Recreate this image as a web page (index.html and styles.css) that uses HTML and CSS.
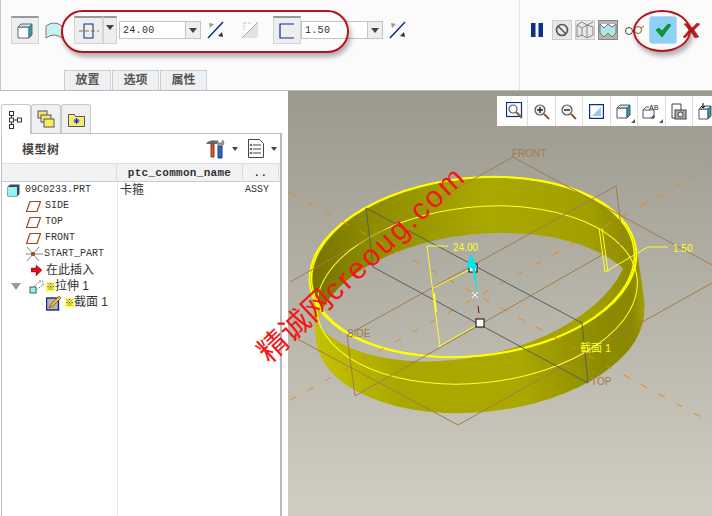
FILE: index.html
```html
<!DOCTYPE html>
<html>
<head>
	<title>Extrude - model tree</title>
	<meta charset="utf-8">
	<link rel="stylesheet" href="styles.css">
</head>
<body>

<div id="app">
	<div class="ribbon">
		<div class="ribbon-main">
			<div class="tools">
				<div class="tool-btn solid-btn">
					<svg width="16" height="16" viewBox="0 0 16 16"><path d="M1 4h11v11H1z" fill="#fff" stroke="#667"/><path d="M1 4l3-3h11l-3 3z" fill="#bfeeee" stroke="#667"/><path d="M12 4l3-3v11l-3 3z" fill="#18a8a8" stroke="#667"/></svg>
				</div>
				<svg class="surf-icon" width="18" height="18" viewBox="0 0 18 18"><path d="M1 17V5Q9 -1 17 5V17Q9 11 1 17z" fill="#c8f2f0" stroke="#778"/></svg>
				<div class="tool-btn side-btn">
					<svg width="20" height="18" viewBox="0 0 20 18"><rect x="5" y="2" width="9" height="14" fill="none" stroke="#0a2a8a"/><path d="M0 9h20" stroke="#a8642c" stroke-dasharray="4 2"/></svg>
				</div>
				<div class="tool-drop"><i class="arrow"></i></div>
				<div class="field first-field">
					<span class="field-value">24.00</span>
					<span class="field-drop"><i class="arrow"></i></span>
				</div>
				<svg class="flip-a" width="18" height="18" viewBox="0 0 18 18"><path d="M1 17L16 1" stroke="#0a2a8a" stroke-width="1.5"/><path d="M2 2l5 1-4 4z" fill="#999"/><path d="M16 16l-5-1 4-4z" fill="#333"/></svg>
				<svg class="thicken" width="19" height="18" viewBox="0 0 19 18"><path d="M1 17L17 1v14l-2 2z" fill="#e2e2e2"/><path d="M1 17L17 1" stroke="#aaa"/><path d="M3 2h8M3 2v7" stroke="#aaa" stroke-dasharray="1 1"/></svg>
				<div class="tool-btn thick-btn">
					<svg width="16" height="16" viewBox="0 0 16 16"><path d="M15 1H1v14h14" fill="none" stroke="#0a2a8a" stroke-width="1.2"/></svg>
				</div>
				<div class="field second-field">
					<span class="field-value">1.50</span>
					<span class="field-drop"><i class="arrow"></i></span>
				</div>
				<svg class="flip-b" width="18" height="18" viewBox="0 0 18 18"><path d="M1 17L16 1" stroke="#0a2a8a" stroke-width="1.5"/><path d="M2 2l5 1-4 4z" fill="#999"/><path d="M16 16l-5-1 4-4z" fill="#333"/></svg>
			</div>
			<div class="tabs">
				<div class="tab">放置</div>
				<div class="tab">选项</div>
				<div class="tab">属性</div>
			</div>
		</div>
		<div class="ribbon-actions">
			<svg class="pause" width="12" height="14" viewBox="0 0 12 14"><path d="M0 0h4.500v14H0zM7.500 0H12v14H7.500z" fill="#0e2f8e"/></svg>
			<div class="mini-btn">
				<svg width="14" height="14" viewBox="0 0 14 14"><circle cx="7" cy="7" r="5.500" fill="none" stroke="#555" stroke-width="1.600"/><path d="M3 3l8 8" stroke="#555" stroke-width="1.600"/></svg>
			</div>
			<div class="mini-btn">
				<svg width="18" height="18" viewBox="0 0 18 18" fill="none" stroke="#888"><path d="M1 4l5 3 5-3 6 2v8l-6 3-5-3-5 2zM6 7v8M11 4v13M1 4l5-3 5 3 6-3"/></svg>
			</div>
			<div class="mini-btn mini-on">
				<svg width="18" height="16" viewBox="0 0 18 16"><path d="M1 2l4 4 4-4 4 3 4-3v9l-4 4-4-4-4 4-4-4z" fill="#aee6ea" stroke="#777"/><path d="M1 2l4 4 4-4 4 3 4-3" fill="#fff" stroke="#777"/></svg>
			</div>
			<svg class="glasses" width="20" height="12" viewBox="0 0 20 12" fill="none"><circle cx="5" cy="7" r="3.500" stroke="#444"/><circle cx="14" cy="6" r="3.500" stroke="#8a5a2a"/><path d="M8.500 6l2-.5M17 4l3-2" stroke="#8a5a2a"/></svg>
			<div class="ok-btn">
				<svg width="16" height="14" viewBox="0 0 16 14"><path d="M1 7l3-2 3 3 6-7 3 1-9 12z" fill="#0c9a2c" stroke="#066a1c" stroke-width=".6"/></svg>
			</div>
			<svg class="cancel" width="17" height="15" viewBox="0 0 17 15"><path d="M1 1l4-1 4 5 5-5 3 1-6 6 5 7-4 1-4-6-6 6-2-1 6-7z" fill="#c8201c" stroke="#8c1410" stroke-width=".4"/></svg>
		</div>
	</div>

	<div class="work">
		<div class="tree-panel">
			<div class="panel-tabs">
				<div class="panel-tab panel-tab-on">
					<svg width="14" height="18" viewBox="0 0 14 18" fill="#fff" stroke="#333"><rect x=".5" y=".5" width="4" height="4"/><rect x=".5" y="7" width="4" height="4"/><rect x=".5" y="13.500" width="4" height="4"/><rect x="8.500" y="7" width="4" height="4"/><path d="M2.500 4.500V7M2.500 11v2.500M4.500 9h4" fill="none"/></svg>
				</div>
				<div class="panel-tab">
					<svg width="18" height="18" viewBox="0 0 18 18" stroke="#555" fill="#f4e878"><rect x="1" y="1" width="9" height="7"/><rect x="4" y="5" width="10" height="7"/><rect x="7" y="9" width="10" height="8" fill="#f8ec60"/></svg>
				</div>
				<div class="panel-tab">
					<svg width="17" height="15" viewBox="0 0 17 15"><path d="M.5 2.500h6l1 2h9v10H.5z" fill="#f6ee70" stroke="#555"/><path d="M8.500 6v6M5.500 9h6M6.500 7l4 4M10.500 7l-4 4" stroke="#1020d0"/></svg>
				</div>
			</div>
			<div class="panel-body">
				<div class="panel-head">
					<h2>模型树</h2>
					<svg class="tools-icon" width="19" height="20" viewBox="0 0 19 20"><path d="M0 4q5-4 11-2v3H1z" fill="#667"/><path d="M5 5h3v13H5z" fill="#d8562c" stroke="#8a3a1c"/><path d="M12 7h4v12h-4z" fill="#2c68c8" stroke="#1c3a80"/><path d="M11 1l2 3h2l2-3 1 4-2 2h-4z" fill="#999" stroke="#555" stroke-width=".5"/></svg>
					<i class="arrow head-arrow"></i>
					<svg class="list-icon" width="16" height="19" viewBox="0 0 16 19" fill="none" stroke="#444"><path d="M.5.5h11l4 4v14H.5z" fill="#fff"/><path d="M5 6h8M5 10h8M5 14h8"/><circle cx="3" cy="6" r=".8"/><circle cx="3" cy="10" r=".8"/><circle cx="3" cy="14" r=".8"/></svg>
					<i class="arrow head-arrow last-arrow"></i>
				</div>
				<div class="grid-head">
					<div class="col-name"></div>
					<div class="col-common">ptc_common_name</div>
					<div class="col-dots">..</div>
				</div>
				<div class="grid-body">
					<div class="row">
						<div class="col-name part">
							<svg class="ico" width="13" height="13" viewBox="0 0 13 13"><path d="M.5 3L3 .5h9.500v9.500L10 12.500H.5z" fill="#445"/><rect x="1" y="3" width="9" height="9" fill="#8ff4f4"/></svg>
							<span>09C0233.PRT</span>
						</div>
						<div class="col-common cjk">卡箍</div>
						<div class="col-dots">ASSY</div>
					</div>
					<div class="row"><div class="col-name child">
						<svg class="ico" width="15" height="11" viewBox="0 0 15 11"><path d="M4 .5h10.500L11 10.500H.5z" fill="none" stroke="#9a4a1c" stroke-width="1.200"/></svg>
						<span>SIDE</span>
					</div></div>
					<div class="row"><div class="col-name child">
						<svg class="ico" width="15" height="11" viewBox="0 0 15 11"><path d="M4 .5h10.500L11 10.500H.5z" fill="none" stroke="#9a4a1c" stroke-width="1.200"/></svg>
						<span>TOP</span>
					</div></div>
					<div class="row"><div class="col-name child">
						<svg class="ico" width="15" height="11" viewBox="0 0 15 11"><path d="M4 .5h10.500L11 10.500H.5z" fill="none" stroke="#9a4a1c" stroke-width="1.200"/></svg>
						<span>FRONT</span>
					</div></div>
					<div class="row"><div class="col-name child">
						<svg class="ico" width="17" height="16" viewBox="0 0 17 16" fill="none" stroke="#666"><path d="M1 1l12 14M13 1L1 15M0 8h17" stroke-width=".8"/><circle cx="7" cy="8" r="2" fill="#9a4a1c" stroke="none"/></svg>
						<span class="tight">START_PART</span>
					</div></div>
					<div class="row"><div class="col-name child">
						<svg class="ico ico-arrow" width="11" height="11" viewBox="0 0 11 11"><path d="M0 3h5V0l6 5-6 6V7H0z" fill="#d8101c" stroke="#600" stroke-width=".4"/></svg>
						<span class="cjk">在此插入</span>
					</div></div>
					<div class="row"><div class="col-name child feature">
						<i class="twist"></i>
						<svg class="ico" width="15" height="14" viewBox="0 0 15 14" fill="none"><rect x="1" y="7" width="6" height="6" fill="#8ff4f4" stroke="#555"/><path d="M4 7l8-6M7 10l7-5M10 1h4v4" stroke="#889" stroke-dasharray="2 1"/></svg>
						<span class="cjk"><b class="star">※</b>拉伸 1</span>
					</div></div>
					<div class="row"><div class="col-name sketch">
						<svg class="ico" width="16" height="16" viewBox="0 0 16 16"><rect x=".5" y="3" width="12" height="12" fill="#b8b4a4" stroke="#0a2a8a" stroke-width="1.400"/><path d="M3 13l2-4 8-8 2 2-8 8z" fill="#e8b838" stroke="#633" stroke-width=".6"/></svg>
						<span class="cjk"><b class="star">※</b>截面 1</span>
					</div></div>
				</div>
			</div>
		</div>

		<div class="view">
			<svg class="scene" width="424" height="425" viewBox="288 91 424 425">
				<defs>
					<linearGradient id="bg" gradientUnits="userSpaceOnUse" x1="0" y1="91" x2="0" y2="516">
						<stop offset="0" stop-color="#9b998d"/>
						<stop offset="1" stop-color="#d0cec2"/>
					</linearGradient>
					<linearGradient id="outer" gradientUnits="userSpaceOnUse" x1="312" y1="0" x2="648" y2="0">
						<stop offset="0" stop-color="#c4c200"/>
						<stop offset=".25" stop-color="#a9a700"/>
						<stop offset=".6" stop-color="#aaa800"/>
						<stop offset=".85" stop-color="#8d8b00"/>
						<stop offset=".95" stop-color="#8a8800"/>
						<stop offset="1" stop-color="#a8a600"/>
					</linearGradient>
					<linearGradient id="inner" gradientUnits="userSpaceOnUse" x1="310" y1="0" x2="640" y2="0">
						<stop offset="0" stop-color="#757300"/>
						<stop offset=".2" stop-color="#8e8c00"/>
						<stop offset=".55" stop-color="#aaa800"/>
						<stop offset=".85" stop-color="#a2a000"/>
						<stop offset="1" stop-color="#8a8800"/>
					</linearGradient>
					<clipPath id="top-clip">
						<ellipse cx="473" cy="267" rx="164" ry="89" transform="rotate(-6 473 267)"/>
					</clipPath>
				</defs>

				<rect x="288" y="91" width="424" height="425" fill="url(#bg)"/>

				<!-- ring -->
				<ellipse cx="480" cy="323" rx="165" ry="89" transform="rotate(-6 480 323)" fill="url(#outer)"/>
				<path d="M310 284L316 339L645 306L637 250z" fill="url(#outer)"/>
				<ellipse cx="473" cy="267" rx="164" ry="89" transform="rotate(-6 473 267)" fill="url(#inner)"/>
				<ellipse cx="480" cy="323" rx="165" ry="89" transform="rotate(-6 480 323)" fill="url(#bg)" clip-path="url(#top-clip)"/>
				<ellipse cx="473" cy="267" rx="164" ry="89" transform="rotate(-6 473 267)" fill="none" stroke="#ffff00" stroke-width="2"/>
				<ellipse cx="473" cy="267" rx="162" ry="89" transform="rotate(-6 473 267)" fill="none" stroke="#ffff00" stroke-width="1.500"/>
				<ellipse cx="477" cy="295" rx="161" ry="88" transform="rotate(-6 477 295)" fill="none" stroke="#ffff30" stroke-width="1"/>

				<!-- datum lines -->
				<g stroke="#e8871e" stroke-dasharray="7 13" fill="none">
					<path d="M290 193L712 423"/>
					<path d="M290 400L712 167"/>
				</g>
				<g stroke="#a37a4c" fill="none">
					<path d="M290 282L513 157L712 265"/>
					<path d="M290 335L458 425L712 283"/>
					<path d="M616 186L347 335L355 396L623 243z"/>
				</g>
				<path d="M582 323L366 208L373 267L588 383z" fill="none" stroke="#5c5c58"/>

				<text class="datum-label" x="512" y="157">FRONT</text>
				<text class="datum-label" x="347" y="337">SIDE</text>
				<text class="datum-label" x="591" y="385">TOP</text>

				<!-- dimensions -->
				<g stroke="#ffff20" fill="none">
					<path d="M448 246H427L440 347"/>
					<path d="M438 347L480 323"/>
					<path d="M433 288L473 268"/>
					<path d="M668 247H648L605 272"/>
					<path d="M599 228L605 272M602 228L608 272"/>
					<path d="M434 293L436 312" stroke-width="2"/>
				</g>
				<text class="dim-label" x="453" y="251">24.00</text>
				<text class="dim-label" x="673" y="252">1.50</text>
				<text class="dim-label cjk-label" x="580" y="352">截面 1</text>

				<!-- drag handles -->
				<rect x="469" y="264" width="8" height="8" fill="#fff" stroke="#000"/>
				<rect x="476" y="319" width="8" height="8" fill="#fff" stroke="#000"/>
				<path d="M471 253L477 268H475L478 297L472 268H466z" fill="#00e8e8"/>
				<path d="M472 292l6 6M478 292l-6 6" stroke="#fff"/>
				<path d="M478 306l1 7" stroke="#800030"/>
			</svg>
			<div class="viewbar">
				<div class="vb-cell"><svg width="18" height="18" viewBox="0 0 18 18" fill="none"><rect x=".5" y=".5" width="15" height="14" stroke="#0a2a8a" stroke-width="1.200"/><circle cx="7" cy="7" r="4" stroke="#555" stroke-width="1.200"/><path d="M10 10l6 6" stroke="#8a5a2a" stroke-width="2"/></svg></div>
				<div class="vb-cell"><svg width="17" height="17" viewBox="0 0 17 17" fill="none"><circle cx="7" cy="7" r="5" fill="#eee" stroke="#555" stroke-width="1.200"/><path d="M4 7h6M7 4v6" stroke="#222" stroke-width="1.400"/><path d="M11 11l5 5" stroke="#8a5a2a" stroke-width="2"/></svg></div>
				<div class="vb-cell"><svg width="17" height="17" viewBox="0 0 17 17" fill="none"><circle cx="7" cy="7" r="5" fill="#eee" stroke="#555" stroke-width="1.200"/><path d="M4 7h6" stroke="#222" stroke-width="1.400"/><path d="M11 11l5 5" stroke="#8a5a2a" stroke-width="2"/></svg></div>
				<div class="vb-cell"><svg width="15" height="15" viewBox="0 0 15 15"><rect x=".5" y=".5" width="14" height="14" fill="#fff" stroke="#0a2a8a" stroke-width="1.400"/><path d="M3 12L12 3v9z" fill="#9cc8e8"/></svg></div>
				<div class="vb-cell has-more"><svg width="15" height="15" viewBox="0 0 15 15" stroke="#556"><path d="M1 4h10v10H1z" fill="#fff"/><path d="M1 4l3-3h10l-3 3z" fill="#bfeeee"/><path d="M11 4l3-3v10l-3 3z" fill="#18a8a8"/></svg></div>
				<div class="vb-cell has-more"><svg width="18" height="16" viewBox="0 0 18 16" stroke="#556"><path d="M1 7h11v8H1z" fill="#fff"/><path d="M1 7l3-3h3" fill="none"/><path d="M9 15h3v-3z" fill="#18a8a8"/><text class="vb-text" x="7" y="7" stroke="none">AB</text></svg></div>
				<div class="vb-cell"><svg width="16" height="17" viewBox="0 0 16 17" fill="none" stroke="#444"><path d="M1 1h9v14H1z" fill="#fff"/><rect x="4" y="7" width="11" height="9" fill="#aaa"/><circle cx="9.500" cy="11.500" r="2.500" fill="#eee"/></svg></div>
				<div class="vb-cell"><svg width="16" height="17" viewBox="0 0 16 17" stroke="#556"><path d="M1 6h9v10H1z" fill="#fff"/><path d="M1 6l3-3h9l-3 3z" fill="#bfeeee"/><path d="M10 6l3-3v10l-3 3z" fill="#18a8a8"/><path d="M5 0v5M3 3l2 2 2-2" stroke="#111" fill="none"/></svg></div>
			</div>
		</div>
	</div>

	<div class="mark mark-tools"></div>
	<div class="mark mark-ok"></div>
	<div class="watermark">精诚网<span class="watermark-url">creoug.com</span></div>
</div>

</body>
</html>
```

FILE: styles.css
```css
* {
	box-sizing: border-box;
}
html, body {
	margin: 0;
	padding: 0;
}
#app {
	position: relative;
	width: 712px;
	height: 516px;
	overflow: hidden;
	background: #fff;
	font-family: "Liberation Mono", monospace;
	font-size: 10px;
	color: #333;
}
.arrow {
	display: block;
	width: 0;
	height: 0;
	border-left: 4px solid transparent;
	border-right: 4px solid transparent;
	border-top: 5px solid #444;
}
.cjk {
	font-family: "Liberation Sans", "Noto Sans CJK SC", sans-serif;
	font-size: 12px;
}

/* top ribbon */
.ribbon {
	display: flex;
	height: 91px;
	background: #fbfbfb;
	border-left: 1px solid #c8c8c8;
	border-bottom: 1px solid #bcbcbc;
}
.ribbon-main {
	width: 519px;
	border-right: 1px solid #e2e2e2;
	padding: 16px 0 0 10px;
}
.tools {
	display: flex;
	align-items: center;
	height: 28px;
}
.tool-btn {
	display: flex;
	align-items: center;
	justify-content: center;
	width: 28px;
	height: 28px;
	background: #eceef0;
	border: 1px solid #d4d4d4;
	border-top: 2px solid #999;
}
.surf-icon {
	margin-left: 6px;
}
.side-btn {
	margin-left: 11px;
	width: 29px;
}
.tool-drop {
	display: flex;
	justify-content: center;
	padding-top: 7px;
	width: 14px;
	height: 28px;
	background: #eceef0;
	border: 1px solid #d4d4d4;
	border-top: 2px solid #999;
}
.field {
	display: flex;
	width: 82px;
	height: 18px;
	background: #fff;
	border: 1px solid #c4c4c4;
}
.first-field {
	margin-left: 2px;
}
.second-field {
	width: 82px;
}
.field-value {
	flex: 1;
	padding: 3px 0 0 3px;
	letter-spacing: .3px;
}
.field-drop {
	display: flex;
	align-items: center;
	justify-content: center;
	width: 15px;
	background: #eceef0;
	border-left: 1px solid #c4c4c4;
}
.flip-a {
	margin-left: 6px;
}
.thicken {
	margin-left: 16px;
}
.thick-btn {
	margin-left: 13px;
}
.flip-b {
	margin-left: 6px;
}
.tabs {
	display: flex;
	gap: 1px;
	margin: 26px 0 0 53px;
}
.tab {
	width: 47px;
	height: 20px;
	line-height: 19px;
	text-align: center;
	background: #eef0f2;
	border: 1px solid #cdcdcd;
	border-bottom: 0;
	font-family: "Liberation Sans", "Noto Sans CJK SC", sans-serif;
	font-size: 12px;
	font-weight: bold;
	color: #555;
}
.ribbon-actions {
	display: flex;
	align-items: center;
	height: 60px;
	padding-left: 11px;
}
.pause {
	margin-right: 9px;
}
.mini-btn {
	display: flex;
	align-items: center;
	justify-content: center;
	width: 20px;
	height: 20px;
	margin-right: 3px;
	background: #e8e8e8;
	border: 1px solid #ccc;
}
.mini-on {
	background: #b4b4b4;
	border-color: #888;
}
.glasses {
	margin-left: 3px;
}
.ok-btn {
	display: flex;
	align-items: center;
	justify-content: center;
	width: 28px;
	height: 28px;
	margin-left: 5px;
	background: #8ed0f6;
	border: 1px solid #b4dcf4;
	border-radius: 3px;
}
.cancel {
	margin-left: 6px;
}

/* lower area */
.work {
	display: flex;
	height: 425px;
}
.tree-panel {
	width: 288px;
	padding: 13px 0 0 1px;
	background: #fff;
}
.panel-tabs {
	display: flex;
	height: 29px;
}
.panel-tab {
	display: flex;
	align-items: center;
	justify-content: center;
	width: 30px;
	height: 29px;
	background: #eef0f2;
	border: 1px solid #c8c8c8;
	border-bottom: 0;
	border-radius: 3px 3px 0 0;
}
.panel-tab-on {
	background: #fff;
	position: relative;
	z-index: 1;
	margin-bottom: -1px;
	height: 30px;
}
.panel-body {
	width: 281px;
	height: 383px;
	overflow: hidden;
	border: 1px solid #c0c0c0;
	border-right: 2px solid #bbb;
	border-bottom: 0;
}
.panel-head {
	display: flex;
	align-items: center;
	height: 29px;
	padding-left: 20px;
}
.panel-head h2 {
	margin: 0;
	flex: 1;
	font-family: "Liberation Sans", "Noto Sans CJK SC", sans-serif;
	font-size: 12px;
	font-weight: bold;
	color: #444;
	letter-spacing: .5px;
}
.head-arrow {
	margin: 0 10px 0 7px;
	border-left-width: 3px;
	border-right-width: 3px;
	border-top-width: 4px;
}
.last-arrow {
	margin-right: 3px;
}
.grid-head, .row {
	display: grid;
	grid-template-columns: 115px 126px 36px;
}
.grid-head {
	height: 19px;
	background: #f1f2f3;
	border-top: 1px solid #ddd;
	border-bottom: 1px solid #ccc;
	line-height: 18px;
	text-align: center;
	font-size: 11px;
	font-weight: bold;
	letter-spacing: .3px;
}
.grid-head > div {
	border-right: 1px solid #ddd;
}
.grid-body {
	height: 340px;
	background: linear-gradient(#e8e8e8, #e8e8e8) 115px 0 / 1px 100% no-repeat;
}
.row {
	height: 16px;
	line-height: 16px;
}
.row .col-name {
	display: flex;
	align-items: center;
	white-space: nowrap;
}
.row .col-common {
	padding-left: 3px;
}
.row .col-dots {
	padding-left: 2px;
}
.part {
	padding-left: 5px;
}
.part .ico {
	margin-right: 5px;
}
.child {
	padding-left: 24px;
}
.child .ico {
	margin-right: 4px;
}
.child .ico-arrow {
	margin: 0 4px 0 5px;
}
.tight {
	margin-left: -3px;
}
.feature {
	padding-left: 9px;
}
.feature .ico {
	margin-left: 8px;
	margin-right: 2px;
}
.twist {
	display: block;
	width: 0;
	height: 0;
	border-left: 5px solid transparent;
	border-right: 5px solid transparent;
	border-top: 7px solid #999;
}
.sketch {
	padding-left: 44px;
}
.sketch .ico {
	margin-right: 3px;
}
.star {
	font-weight: normal;
	color: #333;
	background: #ffff60;
	font-size: 9px;
}

/* graphics window */
.view {
	position: relative;
	flex: 1;
}
.scene {
	display: block;
}
.viewbar {
	position: absolute;
	left: 209px;
	top: 5px;
	display: flex;
	height: 30px;
	width: 215px;
	background: #fff;
}
.vb-cell {
	position: relative;
	display: flex;
	align-items: center;
	justify-content: center;
	flex: none;
	width: 27.5px;
	border-right: 1px solid #ddd;
}
.vb-cell:first-child {
	width: 31px;
	padding-left: 6px;
}
.has-more:after {
	content: '';
	position: absolute;
	right: 2px;
	bottom: 3px;
	border-left: 4px solid transparent;
	border-bottom: 4px solid #555;
}
.vb-text {
	font-family: "Liberation Mono", monospace;
	font-size: 8px;
	fill: #333;
}
.datum-label {
	font-family: "Liberation Sans", sans-serif;
	font-size: 10px;
	fill: #a37a4c;
}
.dim-label {
	font-family: "Liberation Sans", sans-serif;
	font-size: 10px;
	fill: #ffff20;
}
.cjk-label {
	font-family: "Liberation Sans", "Noto Sans CJK SC", sans-serif;
	font-size: 11px;
}

/* red hand drawn marks */
.mark {
	position: absolute;
	border: 2px solid #b4121c;
	box-shadow: 2px 4px 5px rgba(0, 0, 0, .3);
}
.mark-tools {
	left: 61px;
	top: 10px;
	width: 288px;
	height: 43px;
	border-radius: 22px;
}
.mark-ok {
	left: 633px;
	top: 10px;
	width: 58px;
	height: 42px;
	border-radius: 50%;
}
.watermark {
	position: absolute;
	left: 274px;
	top: 335px;
	transform: rotate(-43deg);
	transform-origin: 0 100%;
	white-space: nowrap;
	font-family: "Liberation Sans", "Noto Sans CJK SC", sans-serif;
	font-size: 30px;
	line-height: 34px;
	color: #f01818;
}
.watermark-url {
	letter-spacing: 2.5px;
}
```
